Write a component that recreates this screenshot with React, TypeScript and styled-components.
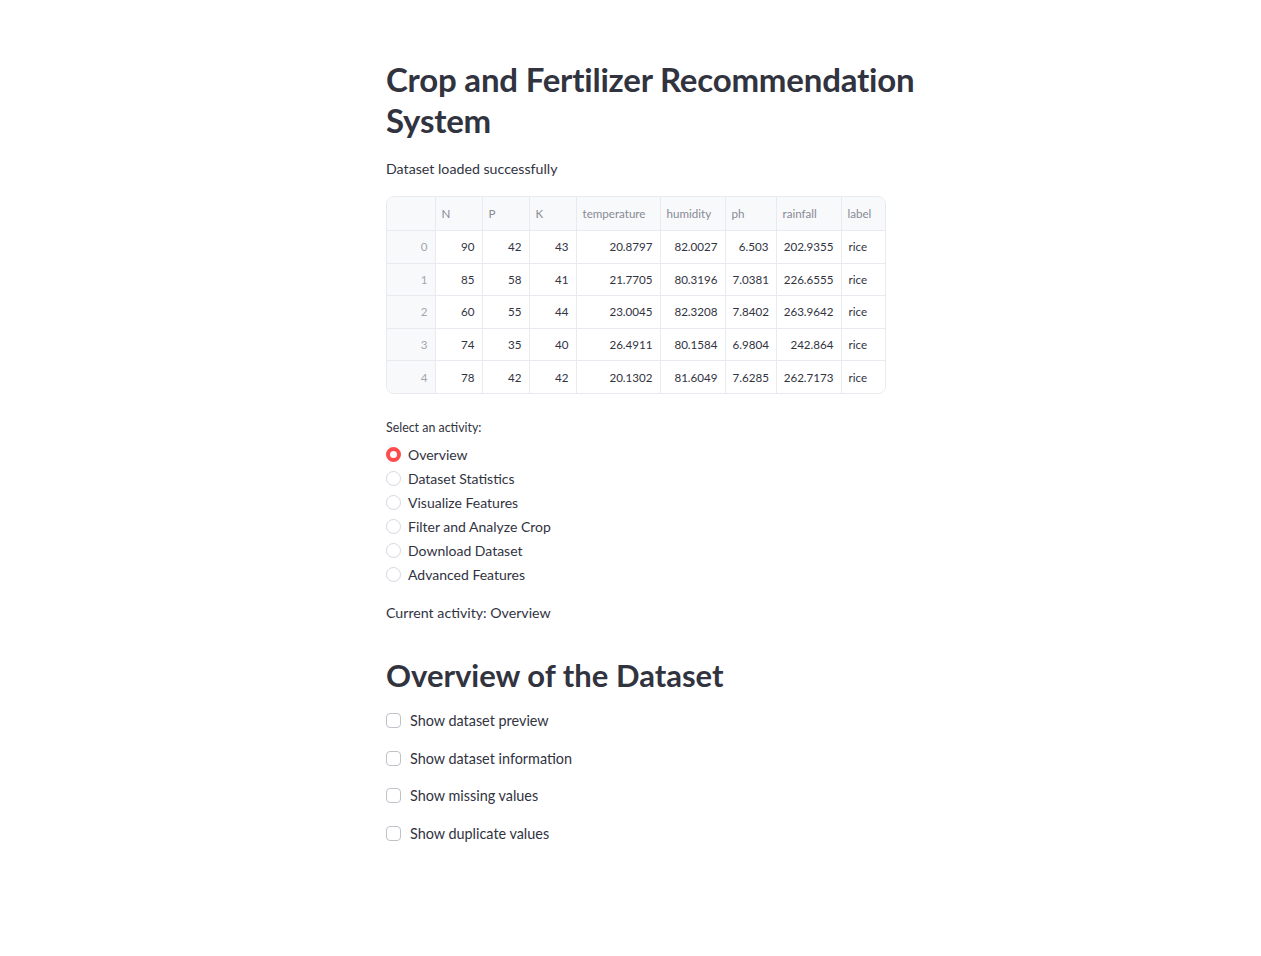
import styled, { createGlobalStyle } from "styled-components";
import { useState } from "react";

const GlobalStyle = createGlobalStyle`
  html, body {
    margin: 0;
    padding: 0;
    background: #ffffff;
  }
  body {
    font-family: "Lato", "Liberation Sans", sans-serif;
    color: #31333f;
  }
`;

const columns = ["", "N", "P", "K", "temperature", "humidity", "ph", "rainfall", "label"];
const widths = [48, 47, 47, 47, 84, 65, 51, 65, 46];

const rows = [
  ["0", "90", "42", "43", "20.8797", "82.0027", "6.503", "202.9355", "rice"],
  ["1", "85", "58", "41", "21.7705", "80.3196", "7.0381", "226.6555", "rice"],
  ["2", "60", "55", "44", "23.0045", "82.3208", "7.8402", "263.9642", "rice"],
  ["3", "74", "35", "40", "26.4911", "80.1584", "6.9804", "242.864", "rice"],
  ["4", "78", "42", "42", "20.1302", "81.6049", "7.6285", "262.7173", "rice"],
];

const activities = [
  "Overview",
  "Dataset Statistics",
  "Visualize Features",
  "Filter and Analyze Crop",
  "Download Dataset",
  "Advanced Features",
];

const toggles = [
  "Show dataset preview",
  "Show dataset information",
  "Show missing values",
  "Show duplicate values",
];

export default function App() {
  const [activity, setActivity] = useState("Overview");
  const [checked, setChecked] = useState<string[]>([]);

  function toggle(name: string) {
    setChecked((prev) =>
      prev.includes(name) ? prev.filter((n) => n !== name) : [...prev, name]
    );
  }

  return (
    <Page>
      <GlobalStyle />
      <Main>
        <Title>Crop and Fertilizer Recommendation System</Title>
        <Text>Dataset loaded successfully</Text>

        <TableWrap>
          <Table>
            <colgroup>
              {widths.map((w, i) => (
                <col key={i} style={{ width: w }} />
              ))}
            </colgroup>
            <thead>
              <tr>
                {columns.map((c, i) => (
                  <HeadCell key={i}>{c}</HeadCell>
                ))}
              </tr>
            </thead>
            <tbody>
              {rows.map((r) => (
                <tr key={r[0]}>
                  {r.map((v, i) => (
                    <Cell key={i} $index={i === 0} $left={i === 8}>
                      {v}
                    </Cell>
                  ))}
                </tr>
              ))}
            </tbody>
          </Table>
        </TableWrap>

        <RadioGroup>
          <SmallLabel>Select an activity:</SmallLabel>
          <RadioList>
            {activities.map((a) => (
              <RadioRow key={a} onClick={() => setActivity(a)}>
                <RadioDot $active={activity === a} />
                <span>{a}</span>
              </RadioRow>
            ))}
          </RadioList>
        </RadioGroup>

        <Current>Current activity: {activity}</Current>

        <Subtitle>Overview of the Dataset</Subtitle>

        <CheckList>
          {toggles.map((t) => (
            <CheckRow key={t} onClick={() => toggle(t)}>
              <CheckBox $on={checked.includes(t)} />
              <span>{t}</span>
            </CheckRow>
          ))}
        </CheckList>
      </Main>
    </Page>
  );
}

const Page = styled.div`
  display: flex;
  min-height: 956px;
  padding: 59px 0 100px 386px;
  box-sizing: border-box;
`;

const Main = styled.div`
  display: flex;
  flex-direction: column;
  width: 560px;
`;

const Title = styled.h1`
  margin: 0 0 16px;
  font-size: 33px;
  font-weight: 700;
  line-height: 41px;
  letter-spacing: -0.2px;
  color: #31333f;
`;

const Text = styled.p`
  margin: 0;
  font-size: 14.2px;
  line-height: 24px;
`;

const Current = styled(Text)`
  margin-top: 14px;
`;

const TableWrap = styled.div`
  margin-top: 15px;
  width: 500px;
  border: 1px solid #e8eaef;
  border-radius: 8px;
  overflow: hidden;
  box-sizing: border-box;
`;

const Table = styled.table`
  width: 100%;
  border-collapse: collapse;
  table-layout: fixed;
  font-size: 11.6px;
`;

const HeadCell = styled.th`
  height: 33px;
  padding: 0 6px;
  text-align: left;
  font-weight: 400;
  color: #878a94;
  background: #f8f9fb;
  border-right: 1px solid #e8eaef;
  border-bottom: 1px solid #e8eaef;
  white-space: nowrap;
  overflow: hidden;

  &:last-child {
    border-right: none;
  }
`;

const Cell = styled.td<{ $index?: boolean; $left?: boolean }>`
  height: 31.6px;
  padding: 0 7px;
  text-align: ${(p) => (p.$left ? "left" : "right")};
  color: ${(p) => (p.$index ? "#a3a6ae" : "#31333f")};
  background: ${(p) => (p.$index ? "#f8f9fb" : "#ffffff")};
  border-right: 1px solid #e8eaef;
  border-bottom: 1px solid #e8eaef;
  white-space: nowrap;

  &:last-child {
    border-right: none;
  }

  tr:last-child & {
    border-bottom: none;
  }
`;

const RadioGroup = styled.div`
  margin-top: 24px;
  display: flex;
  flex-direction: column;
`;

const SmallLabel = styled.div`
  font-size: 12.4px;
  line-height: 20px;
  margin-bottom: 5px;
`;

const RadioList = styled.div`
  display: flex;
  flex-direction: column;
`;

const RadioRow = styled.label`
  display: flex;
  align-items: center;
  gap: 7px;
  height: 24px;
  font-size: 14px;
  cursor: pointer;
`;

const RadioDot = styled.span<{ $active: boolean }>`
  width: 15px;
  height: 15px;
  border-radius: 50%;
  box-sizing: border-box;
  background: #ffffff;
  border: ${(p) => (p.$active ? "4.5px solid #ff4b4b" : "1px solid #d5d7dd")};
  flex-shrink: 0;
`;

const Subtitle = styled.h2`
  margin: 28px 0 0;
  font-size: 31px;
  font-weight: 700;
  line-height: 44px;
  color: #31333f;
`;

const CheckList = styled.div`
  margin-top: 12px;
  display: flex;
  flex-direction: column;
  gap: 13.5px;
`;

const CheckRow = styled.label`
  display: flex;
  align-items: center;
  gap: 9px;
  height: 24px;
  font-size: 14.4px;
  cursor: pointer;
`;

const CheckBox = styled.span<{ $on: boolean }>`
  width: 15px;
  height: 15px;
  box-sizing: border-box;
  border-radius: 4px;
  border: 1px solid ${(p) => (p.$on ? "#ff4b4b" : "#bfc2c8")};
  background: ${(p) => (p.$on ? "#ff4b4b" : "#ffffff")};
  flex-shrink: 0;
`;
